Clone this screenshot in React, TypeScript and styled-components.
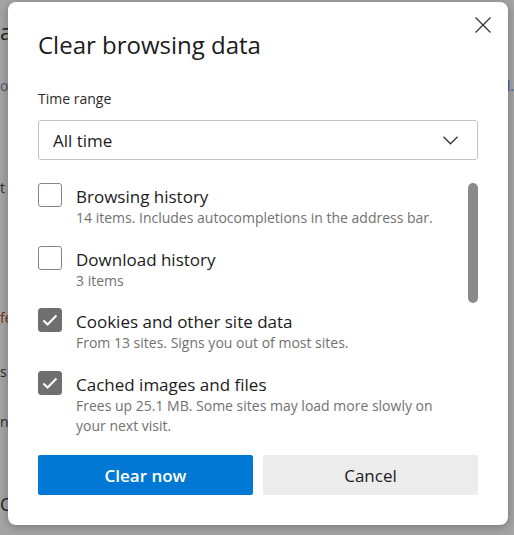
import React, { useState } from 'react';
import styled, { createGlobalStyle } from 'styled-components';

interface DataItem {
  id: string;
  label: string;
  detail: string;
  checked: boolean;
}

const items: DataItem[] = [
  { id: 'history', label: 'Browsing history', detail: '14 items. Includes autocompletions in the address bar.', checked: false },
  { id: 'downloads', label: 'Download history', detail: '3 items', checked: false },
  { id: 'cookies', label: 'Cookies and other site data', detail: 'From 13 sites. Signs you out of most sites.', checked: true },
  { id: 'cache', label: 'Cached images and files', detail: 'Frees up 25.1 MB. Some sites may load more slowly on your next visit.', checked: true },
];

const GlobalStyle = createGlobalStyle`
  html, body {
    margin: 0;
    padding: 0;
  }
  body {
    font-family: "Open Sans", "Noto Sans", sans-serif;
    background: #a4a4a4;
  }
`;

const Backdrop = styled.div`
  position: relative;
  width: 514px;
  height: 535px;
  overflow: hidden;
  background: #a4a4a4;
`;

const Page = styled.div`
  display: flex;
  flex-direction: column;
`;

const PageLine = styled.div<{ $top: number; $size: number; $color: string }>`
  display: flex;
  justify-content: space-between;
  margin-top: ${(p) => p.$top}px;
  font-size: ${(p) => p.$size}px;
  line-height: ${(p) => p.$size + 4}px;
  color: ${(p) => p.$color};
  white-space: nowrap;
`;

const PageLink = styled.span`
  color: #2a5aa8;
`;

const Dialog = styled.div`
  position: absolute;
  left: 8px;
  top: 2px;
  width: 500px;
  height: 523px;
  box-sizing: border-box;
  padding: 27px 30px 30px;
  display: flex;
  flex-direction: column;
  background: #ffffff;
  border-radius: 8px;
  box-shadow: 0 2px 10px rgba(0, 0, 0, 0.28);
`;

const Title = styled.h2`
  margin: 0;
  font-size: 24px;
  font-weight: 400;
  line-height: 32px;
  color: #1b1b1b;
`;

const CloseButton = styled.button`
  position: absolute;
  top: 12px;
  right: 14px;
  width: 22px;
  height: 22px;
  padding: 0;
  border: none;
  background: transparent;
  display: flex;
  align-items: center;
  justify-content: center;
  cursor: pointer;
`;

const FieldLabel = styled.div`
  margin-top: 28px;
  font-size: 14px;
  line-height: 20px;
  color: #2b2b2b;
`;

const Select = styled.div`
  margin-top: 11px;
  height: 40px;
  box-sizing: border-box;
  padding: 0 19px 0 14px;
  display: flex;
  align-items: center;
  justify-content: space-between;
  border: 1px solid #c2c2c2;
  border-radius: 3px;
  font-size: 17px;
  color: #1b1b1b;
`;

const ListArea = styled.div`
  margin-top: 23px;
  height: 257px;
  display: flex;
`;

const List = styled.div`
  flex: 1;
  overflow: hidden;
  display: flex;
  flex-direction: column;
  gap: 17.5px;
`;

const ScrollTrack = styled.div`
  width: 10px;
  flex: none;
`;

const ScrollThumb = styled.div`
  height: 120px;
  border-radius: 5px;
  background: #8a8a8a;
`;

const Row = styled.label`
  display: flex;
  align-items: flex-start;
  gap: 14px;
  flex: none;
  cursor: pointer;
`;

const Box = styled.span<{ $checked: boolean }>`
  width: 24px;
  height: 24px;
  flex: none;
  box-sizing: border-box;
  border-radius: 3px;
  border: 1px solid ${(p) => (p.$checked ? '#6f6f6f' : '#858585')};
  background: ${(p) => (p.$checked ? '#6f6f6f' : '#ffffff')};
  display: flex;
  align-items: center;
  justify-content: center;
`;

const RowText = styled.div`
  padding-top: 3px;
  padding-right: 24px;
  display: flex;
  flex-direction: column;
`;

const RowLabel = styled.span`
  font-size: 17px;
  line-height: 22px;
  color: #1b1b1b;
`;

const RowDetail = styled.span`
  font-size: 14px;
  line-height: 20px;
  color: #717171;
`;

const Actions = styled.div`
  margin-top: 15px;
  display: flex;
  gap: 10px;
`;

const ActionButton = styled.button<{ $primary?: boolean }>`
  flex: 1;
  height: 40px;
  border: none;
  border-radius: 2px;
  font-family: inherit;
  font-size: 17px;
  font-weight: ${(p) => (p.$primary ? 600 : 400)};
  color: ${(p) => (p.$primary ? '#ffffff' : '#1b1b1b')};
  background: ${(p) => (p.$primary ? '#0078d4' : '#ececec')};
  cursor: pointer;
`;

const CloseIcon = () => (
  <svg width="16" height="16" viewBox="0 0 16 16">
    <path d="M0.5 0.5 L15.5 15.5 M15.5 0.5 L0.5 15.5" stroke="#333" strokeWidth="1.3" fill="none" />
  </svg>
);

const Chevron = () => (
  <svg width="15" height="9" viewBox="0 0 15 9">
    <path d="M0.5 0.8 L7.5 7.8 L14.5 0.8" stroke="#333" strokeWidth="1.3" fill="none" />
  </svg>
);

const Check = () => (
  <svg width="24" height="24" viewBox="0 0 24 24">
    <path d="M4.8 12.6 L9.4 17 L19 7.2" stroke="#fff" strokeWidth="2.3" fill="none" />
  </svg>
);

const App = () => {
  const [checked, setChecked] = useState<Record<string, boolean>>(
    Object.fromEntries(items.map((i) => [i.id, i.checked]))
  );

  return (
    <>
      <GlobalStyle />
      <Backdrop>
        <Page>
          <PageLine $top={18} $size={22} $color="#222">a</PageLine>
          <PageLine $top={33} $size={14} $color="#4a5670">
            <span>o</span>
            <PageLink>l.</PageLink>
          </PageLine>
          <PageLine $top={84} $size={14} $color="#2a2a2a">
            {' t'}
          </PageLine>
          <PageLine $top={112} $size={14} $color="#7a2a20">fe</PageLine>
          <PageLine $top={36} $size={14} $color="#2a2a2a">s</PageLine>
          <PageLine $top={32} $size={14} $color="#2a2a2a">n</PageLine>
          <PageLine $top={62} $size={18} $color="#222">C</PageLine>
        </Page>

        <Dialog>
          <Title>Clear browsing data</Title>
          <CloseButton aria-label="Close">
            <CloseIcon />
          </CloseButton>

          <FieldLabel>Time range</FieldLabel>
          <Select>
            <span>All time</span>
            <Chevron />
          </Select>

          <ListArea>
            <List>
              {items.map((item) => (
                <Row
                  key={item.id}
                  onClick={() => setChecked({ ...checked, [item.id]: !checked[item.id] })}
                >
                  <Box $checked={checked[item.id]}>{checked[item.id] && <Check />}</Box>
                  <RowText>
                    <RowLabel>{item.label}</RowLabel>
                    <RowDetail>{item.detail}</RowDetail>
                  </RowText>
                </Row>
              ))}
            </List>
            <ScrollTrack>
              <ScrollThumb />
            </ScrollTrack>
          </ListArea>

          <Actions>
            <ActionButton $primary>Clear now</ActionButton>
            <ActionButton>Cancel</ActionButton>
          </Actions>
        </Dialog>
      </Backdrop>
    </>
  );
};

export default App;
